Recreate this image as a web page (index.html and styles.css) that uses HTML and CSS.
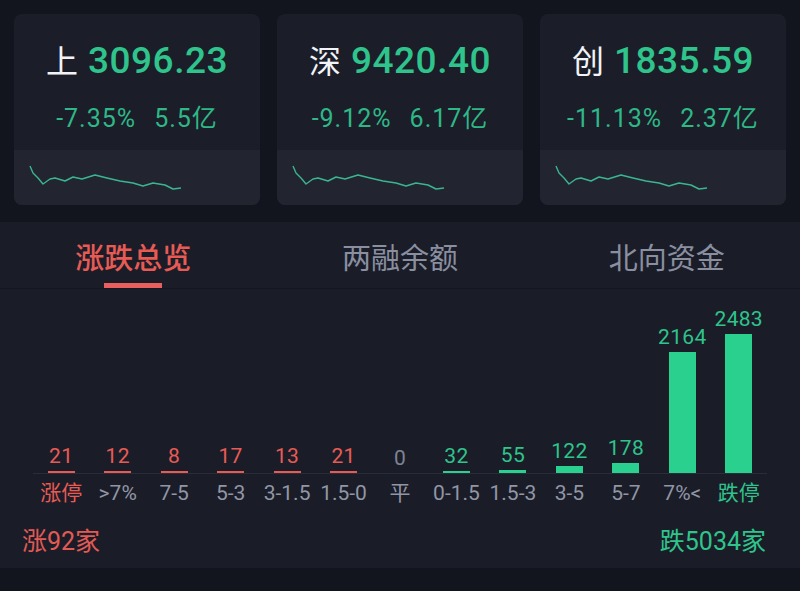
FILE: index.html
```html
<!DOCTYPE html>
<html lang="zh-CN">
<head>
<meta charset="utf-8">
<title>涨跌总览</title>
<link rel="stylesheet" href="styles.css">
</head>
<body>
<div class="page">
  <div class="cards">
    <div class="card">
      <div class="card-top">
        <div class="idx"><span class="idx-name">上</span><span class="idx-val">3096.23</span></div>
        <div class="idx-sub"><span>-7.35%</span><span>5.5亿</span></div>
      </div>
      <div class="spark">
        <svg width="200" height="54" viewBox="0 0 200 54"><polyline class="spark-line" points="16,16 19,23 24,28 29,34 36,29 41,28 51,31 59,27 68,29 81,25 93,28 106,31 119,33 129,36 139,33 151,35 159,39 167,38"/></svg>
      </div>
    </div>
    <div class="card">
      <div class="card-top">
        <div class="idx"><span class="idx-name">深</span><span class="idx-val">9420.40</span></div>
        <div class="idx-sub"><span>-9.12%</span><span>6.17亿</span></div>
      </div>
      <div class="spark">
        <svg width="200" height="54" viewBox="0 0 200 54"><polyline class="spark-line" points="16,16 19,23 24,28 29,34 36,29 41,28 51,31 59,27 68,29 81,25 93,28 106,31 119,33 129,36 139,33 151,35 159,39 167,38"/></svg>
      </div>
    </div>
    <div class="card">
      <div class="card-top">
        <div class="idx"><span class="idx-name">创</span><span class="idx-val">1835.59</span></div>
        <div class="idx-sub"><span>-11.13%</span><span>2.37亿</span></div>
      </div>
      <div class="spark">
        <svg width="200" height="54" viewBox="0 0 200 54"><polyline class="spark-line" points="16,16 19,23 24,28 29,34 36,29 41,28 51,31 59,27 68,29 81,25 93,28 106,31 119,33 129,36 139,33 151,35 159,39 167,38"/></svg>
      </div>
    </div>
  </div>

  <div class="panel">
    <div class="tabs">
      <div class="tab active">涨跌总览</div>
      <div class="tab">两融余额</div>
      <div class="tab">北向资金</div>
    </div>

    <div class="chart">
      <div class="bars">
        <div class="col up"><span class="num">21</span><span class="bar" style="height:2px"></span></div>
        <div class="col up"><span class="num">12</span><span class="bar" style="height:2px"></span></div>
        <div class="col up"><span class="num">8</span><span class="bar" style="height:2px"></span></div>
        <div class="col up"><span class="num">17</span><span class="bar" style="height:2px"></span></div>
        <div class="col up"><span class="num">13</span><span class="bar" style="height:2px"></span></div>
        <div class="col up"><span class="num">21</span><span class="bar" style="height:2px"></span></div>
        <div class="col flat"><span class="num">0</span><span class="bar" style="height:0px"></span></div>
        <div class="col down"><span class="num">32</span><span class="bar" style="height:2px"></span></div>
        <div class="col down"><span class="num">55</span><span class="bar" style="height:3px"></span></div>
        <div class="col down"><span class="num">122</span><span class="bar" style="height:7px"></span></div>
        <div class="col down"><span class="num">178</span><span class="bar" style="height:10px"></span></div>
        <div class="col down"><span class="num">2164</span><span class="bar" style="height:121px"></span></div>
        <div class="col down"><span class="num">2483</span><span class="bar" style="height:139px"></span></div>
      </div>
      <div class="labels">
        <span class="lbl red">涨停</span>
        <span class="lbl">&gt;7%</span>
        <span class="lbl">7-5</span>
        <span class="lbl">5-3</span>
        <span class="lbl">3-1.5</span>
        <span class="lbl">1.5-0</span>
        <span class="lbl">平</span>
        <span class="lbl">0-1.5</span>
        <span class="lbl">1.5-3</span>
        <span class="lbl">3-5</span>
        <span class="lbl">5-7</span>
        <span class="lbl">7%&lt;</span>
        <span class="lbl green">跌停</span>
      </div>
    </div>

    <div class="summary">
      <span class="sum-up">涨92家</span>
      <span class="sum-down">跌5034家</span>
    </div>
  </div>
</div>
</body>
</html>
```

FILE: styles.css
```css
* { box-sizing: border-box; }

html, body {
  margin: 0;
  padding: 0;
  background: #13151e;
}

body {
  font-family: Roboto, "Noto Sans CJK SC", sans-serif;
  width: 800px;
  height: 591px;
  overflow: hidden;
}

.page {
  display: flex;
  flex-direction: column;
}

.cards {
  display: flex;
  gap: 17px;
  padding: 14px 14px 0 14px;
}

.card {
  flex: 1;
  height: 191px;
  background: #1b1e29;
  border-radius: 8px;
  overflow: hidden;
  display: flex;
  flex-direction: column;
}

.card-top {
  height: 136px;
  display: flex;
  flex-direction: column;
  align-items: center;
  padding-top: 23px;
}

.idx {
  display: flex;
  align-items: baseline;
  gap: 10px;
  line-height: 44px;
  height: 44px;
}

.idx-name {
  color: #f2f3f6;
  font-family: "Noto Sans CJK SC", sans-serif;
  font-size: 32px;
  font-weight: 400;
}

.idx-val {
  color: #2ec48b;
  font-size: 37px;
  font-weight: 500;
  letter-spacing: 0.5px;
}

.idx-sub {
  margin-top: 24px;
  display: flex;
  gap: 18px;
  color: #2eb886;
  font-size: 25px;
  line-height: 28px;
  letter-spacing: 1px;
}

.spark {
  flex: 1;
  background: #222530;
}

.spark svg { display: block; }

.spark-line {
  fill: none;
  stroke: #3bb590;
  stroke-width: 1.4;
  stroke-linejoin: round;
}

.panel {
  margin-top: 17px;
  height: 346px;
  background: #1a1d28;
  display: flex;
  flex-direction: column;
}

.tabs {
  display: grid;
  grid-template-columns: repeat(3, 1fr);
  height: 67px;
  border-bottom: 1px solid #151720;
}

.tab {
  display: flex;
  justify-content: center;
  padding-top: 17px;
  font-family: "Noto Sans CJK SC", sans-serif;
  font-size: 29px;
  line-height: 34px;
  color: #8a8fa0;
  position: relative;
}

.tab.active {
  color: #e85b55;
  font-weight: 500;
}

.tab.active::after {
  content: "";
  position: absolute;
  left: 50%;
  bottom: 0;
  width: 58px;
  height: 5px;
  margin-left: -29px;
  background: #e85f5e;
}

.chart {
  padding: 0 33px;
}

.bars {
  display: grid;
  grid-template-columns: repeat(13, 1fr);
  align-items: end;
  height: 185px;
  border-bottom: 1px solid #2a2d39;
}

.col {
  display: flex;
  flex-direction: column;
  align-items: center;
}

.num {
  font-size: 21px;
  line-height: 24px;
  margin-bottom: 3px;
  letter-spacing: 0.3px;
}

.bar {
  display: block;
  width: 27px;
}

.col.up .num { color: #e85b55; }
.col.up .bar { background: #e85b55; }
.col.flat .num { color: #7e8393; }
.col.down .num { color: #2ec48b; }
.col.down .bar { background: #2ad08e; }

.labels {
  display: grid;
  grid-template-columns: repeat(13, 1fr);
  margin-top: 6px;
}

.lbl {
  text-align: center;
  font-size: 21px;
  line-height: 26px;
  color: #9196a5;
  white-space: nowrap;
  font-family: Roboto, "Noto Sans CJK SC", sans-serif;
}

.lbl.red { color: #e85b55; }
.lbl.green { color: #2ec48b; }

.summary {
  display: flex;
  justify-content: space-between;
  padding: 0 34px 0 22px;
  margin-top: 21px;
  font-size: 25px;
  line-height: 30px;
}

.sum-up { color: #e35a55; }
.sum-down { color: #2ec48b; }
```
